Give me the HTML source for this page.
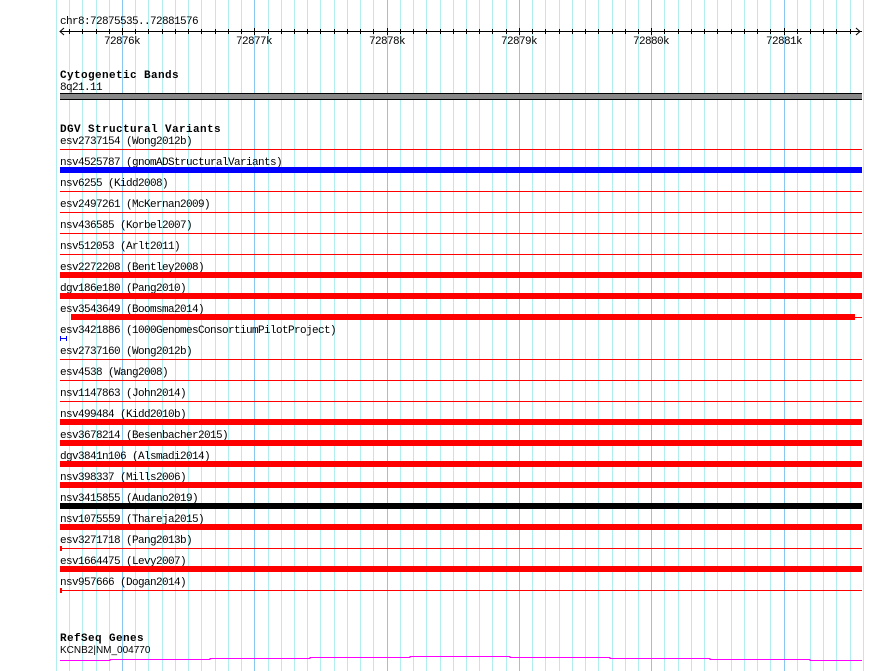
<!DOCTYPE html>
<html><head><meta charset="utf-8"><style>
html,body{margin:0;padding:0;background:#fff;width:890px;height:671px;overflow:hidden}
svg{display:block}
text{font-family:"Liberation Mono","DejaVu Sans Mono",monospace;font-size:11px;letter-spacing:-0.6px;fill:#000}
.b{font-weight:bold;font-size:11px;letter-spacing:0.4px}
</style></head><body>
<svg width="890" height="671" xmlns="http://www.w3.org/2000/svg" shape-rendering="crispEdges">
<g id="grid"></g>
<text x="60" y="24">chr8:72875535..72881576</text>
<line x1="60" y1="31.5" x2="862" y2="31.5" stroke="#000"/>
<path d="M64 28 L60 31.5 L64 35 M856 28 L860 31.5 L856 35" stroke="#000" fill="none" shape-rendering="auto"/>
<g id="ticks" stroke="#000"></g>
<text x="122" y="44" text-anchor="middle">72876k</text>
<text x="254" y="44" text-anchor="middle">72877k</text>
<text x="387" y="44" text-anchor="middle">72878k</text>
<text x="519" y="44" text-anchor="middle">72879k</text>
<text x="651" y="44" text-anchor="middle">72880k</text>
<text x="784" y="44" text-anchor="middle">72881k</text>
<text class="b" x="60" y="78">Cytogenetic Bands</text>
<text x="60" y="90">8q21.11</text>
<rect x="60" y="93" width="802" height="7" fill="#888"/>
<rect x="60" y="93" width="802" height="1" fill="#000"/>
<rect x="60" y="99" width="802" height="1" fill="#000"/>
<text class="b" x="60" y="132">DGV Structural Variants</text>
<g id="rows"></g>
<text class="b" x="60" y="641">RefSeq Genes</text>
<text x="60" y="653" style="font-family:'Liberation Sans',sans-serif;font-size:10px;letter-spacing:0">KCNB2|NM_004770</text>
<path d="M60 660.5H110V659.5H210V658.5H310V657.5H410V656.5H510V657.5H610V658.5H710V659.5H810V660.5H862" stroke="#f0f" fill="none"/>
</svg>
<script>
var ns="http://www.w3.org/2000/svg";
function el(p,t,a){var e=document.createElementNS(ns,t);for(var k in a)e.setAttribute(k,a[k]);p.appendChild(e);return e}
var g=document.getElementById('grid'),tk=document.getElementById('ticks');
for(var k=-5;k<=56;k++){var x=Math.round(122+k*13.23);if(x<55||x>864)continue;
 el(g,'rect',{x:x,y:0,width:1,height:671,fill:(k%10==0)?'#88c8f0':'#b0eef0'});
 if(x>=60&&x<=858)el(tk,'line',{x1:x+0.5,y1:(k%10==0)?28:29,x2:x+0.5,y2:(k%10==0)?35:34});}
var rows=[
["esv2737154 (Wong2012b)","t","red"],
["nsv4525787 (gnomADStructuralVariants)","T","#00f"],
["nsv6255 (Kidd2008)","t","red"],
["esv2497261 (McKernan2009)","t","red"],
["nsv436585 (Korbel2007)","t","red"],
["nsv512053 (Arlt2011)","t","red"],
["esv2272208 (Bentley2008)","T","red"],
["dgv186e180 (Pang2010)","T","red"],
["esv3543649 (Boomsma2014)","P","red"],
["esv3421886 (1000GenomesConsortiumPilotProject)","S","#00f"],
["esv2737160 (Wong2012b)","t","red"],
["esv4538 (Wang2008)","t","red"],
["nsv1147863 (John2014)","t","red"],
["nsv499484 (Kidd2010b)","T","red"],
["esv3678214 (Besenbacher2015)","T","red"],
["dgv3841n106 (Alsmadi2014)","T","red"],
["nsv398337 (Mills2006)","T","red"],
["nsv3415855 (Audano2019)","T","#000"],
["nsv1075559 (Thareja2015)","T","red"],
["esv3271718 (Pang2013b)","k","red"],
["esv1664475 (Levy2007)","T","red"],
["nsv957666 (Dogan2014)","k","red"]];
var r=document.getElementById('rows');
rows.forEach(function(d,i){var c=140+21*i;
 var t=el(r,'text',{x:60,y:c+4});t.textContent=d[0];
 var col=d[2];
 if(d[1]=='t')el(r,'rect',{x:60,y:c+9,width:802,height:1,fill:col});
 if(d[1]=='k'){el(r,'rect',{x:60,y:c+9,width:802,height:1,fill:col});el(r,'rect',{x:60,y:c+7,width:2,height:5,fill:col});}
 if(d[1]=='T')el(r,'rect',{x:60,y:c+6,width:802,height:6,fill:col});
 if(d[1]=='P'){el(r,'rect',{x:71,y:c+6,width:784,height:6,fill:col});el(r,'rect',{x:855,y:c+9,width:7,height:1,fill:col});}
 if(d[1]=='S'){el(r,'rect',{x:60,y:c+9,width:7,height:1,fill:col});el(r,'rect',{x:60,y:c+7,width:1,height:5,fill:col});el(r,'rect',{x:66,y:c+7,width:1,height:5,fill:col});}
});
</script>
</body></html>
